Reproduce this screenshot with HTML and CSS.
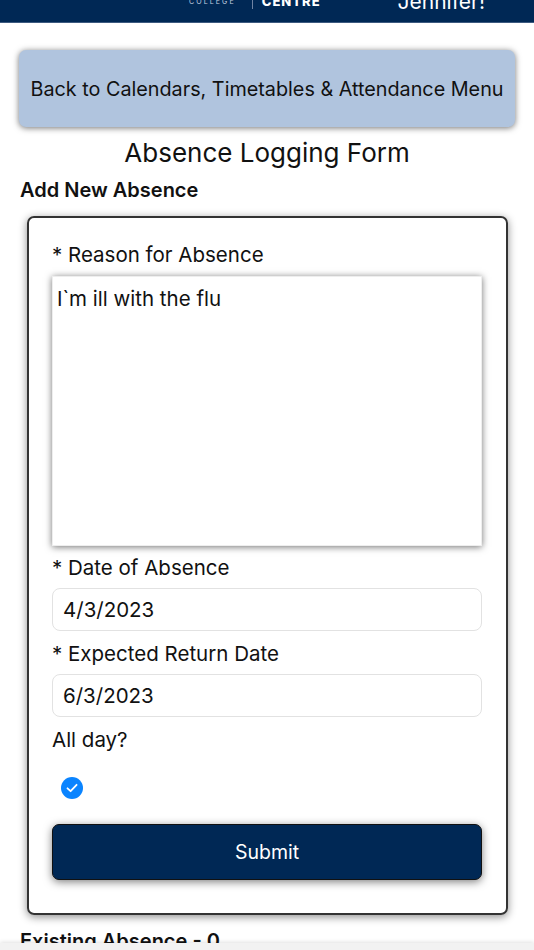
FILE: index.html
```html
<html>
<head>
	<title>Absence Logging Form</title>
	<link rel="stylesheet" href="styles.css">
</head>
<body>

<div class="header">
	<span class="logo-small">COLLEGE</span>
	<span class="logo-bar"></span>
	<span class="logo-big">CENTRE</span>
	<span class="hello">Jennifer!</span>
</div>

<div class="page">
	<div class="back-btn">Back to Calendars, Timetables &amp; Attendance Menu</div>

	<h1 class="title">Absence Logging Form</h1>
	<h2 class="sub">Add New Absence</h2>

	<div class="card">
		<label class="lbl">* Reason for Absence</label>
		<div class="textarea">I`m ill with the flu</div>

		<label class="lbl">* Date of Absence</label>
		<div class="field">4/3/2023</div>

		<label class="lbl">* Expected Return Date</label>
		<div class="field">6/3/2023</div>

		<label class="lbl">All day?</label>
		<div class="check-row">
			<svg width="22" height="22" viewBox="0 0 22 22">
				<circle cx="11" cy="11" r="11" fill="#0a84ff"/>
				<path d="M6.5 11.3 L9.6 14.2 L15.6 7.8" fill="none" stroke="#fff" stroke-width="1.8" stroke-linecap="round" stroke-linejoin="round"/>
			</svg>
		</div>

		<div class="submit">Submit</div>
	</div>

	<h2 class="sub existing">Existing Absence - 0</h2>
</div>

<div class="bottom-bar"></div>

</body>
</html>
```

FILE: styles.css
```css
*{
	box-sizing:border-box;
}
body{
	margin:0;
	font-family:Inter, "Noto Sans", sans-serif;
	color:#111;
	background:#fff;
}

/* header, scrolled mostly out of view */
.header{
	height:23px;
	background:#002855;
	border-bottom:1px solid #3d5a80;
	overflow:hidden;
	display:flex;
	align-items:flex-end;
	color:#fff;
	white-space:nowrap;
}
.logo-small{
	margin-left:189px;
	font-size:7px;
	line-height:7px;
	letter-spacing:2.1px;
	color:#c8d2e0;
	margin-bottom:17px;
}
.logo-bar{
	width:1px;
	height:14px;
	background:#6f83a3;
	margin:0 0 13px 16px;
}
.logo-big{
	margin-left:9px;
	font-size:13px;
	line-height:13px;
	font-weight:800;
	letter-spacing:1px;
	margin-bottom:14px;
}
.hello{
	margin-left:auto;
	margin-right:49px;
	font-size:21px;
	line-height:21px;
	margin-bottom:10px;
}

.page{
	padding:0 0 40px;
}

.back-btn{
	margin:27px 19px 0 19px;
	height:77px;
	background:#b0c4de;
	border-radius:7px;
	box-shadow:0 1px 6px rgba(0,0,0,0.55);
	display:flex;
	align-items:center;
	justify-content:center;
	font-size:19.8px;
	color:#111;
}

.title{
	margin:10px 0 0;
	font-size:26px;
	font-weight:400;
	text-align:center;
	line-height:32px;
}

.sub{
	margin:9px 0 0 20px;
	font-size:20px;
	font-weight:600;
	line-height:24px;
}

.card{
	margin:14px 26px 0 27px;
	border:2px solid #333;
	border-radius:7px;
	box-shadow:0 2px 8px rgba(0,0,0,0.45);
	padding:25px 24px 33px 23px;
	display:flex;
	flex-direction:column;
}

.lbl{
	font-size:20.5px;
	line-height:24px;
	margin-top:11px;
	margin-bottom:8px;
}
.card .lbl:first-child{
	margin-top:0;
	margin-bottom:9px;
}

.textarea{
	height:270px;
	box-shadow:0 1px 7px rgba(0,0,0,0.55);
	border:1px solid #eee;
	padding:10px 4px;
	font-size:20.5px;
	line-height:24px;
	margin-bottom:-1px;
}

.field{
	height:43px;
	border:1px solid #e2e2e2;
	border-radius:8px;
	padding:0 10px;
	display:flex;
	align-items:center;
	font-size:20.5px;
}

.check-row{
	height:56px;
	display:flex;
	align-items:center;
	padding-left:9px;
}

.submit{
	margin-top:8px;
	height:56px;
	background:#002855;
	border:1px solid #111;
	border-radius:7px;
	box-shadow:0 2px 8px rgba(0,0,0,0.5);
	color:#fff;
	font-size:19.5px;
	display:flex;
	align-items:center;
	justify-content:center;
}

.existing{
	margin-top:14px;
}

.bottom-bar{
	position:fixed;
	left:0;
	right:0;
	bottom:0;
	height:7px;
	background:#f2f2f2;
	box-shadow:0 -1px 4px rgba(0,0,0,0.12);
}
```
